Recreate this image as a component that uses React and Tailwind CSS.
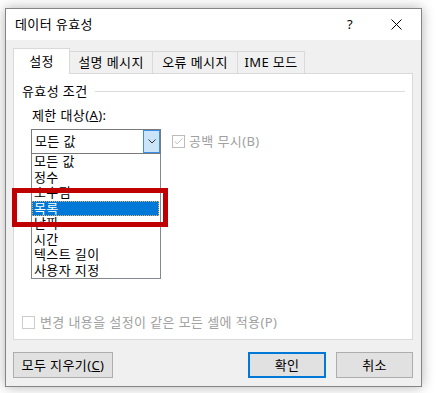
import { Check } from "lucide-react";

const items = ["모든 값", "정수", "소수점", "목록", "날짜", "시간", "텍스트 길이", "사용자 지정"];

const tabs = [
  { label: "설명 메시지", w: "w-[84px]" },
  { label: "오류 메시지", w: "w-[86px]" },
  { label: "IME 모드", w: "w-[68px]" },
];

const App = () => {
  return (
    <div className="w-[438px] h-[393px] bg-white pt-[8px] pl-[5px] font-['Noto_Sans','Noto_Sans_CJK_KR',sans-serif] text-[13px] tracking-[0.4px] text-black">
      <div className="w-[417px] h-[379px] border border-[#858585] bg-[#f0f0f0] flex flex-col shadow-[0_0_12px_rgba(0,0,0,0.3)]">
        {/* title bar */}
        <div className="h-[31px] shrink-0 bg-white flex items-center pl-[9px] pr-[19px]">
          <span className="leading-none">데이터 유효성</span>
          <span className="ml-auto mr-[38px] leading-none text-[13px]">?</span>
          <svg width="11" height="11" viewBox="0 0 11 11" className="text-black">
            <path d="M0.5 0.5 L10.5 10.5 M10.5 0.5 L0.5 10.5" stroke="currentColor" strokeWidth="1" fill="none" />
          </svg>
        </div>

        <div className="flex-1 flex flex-col pl-[7px] pr-[8px] pt-[8px]">
          {/* tabs */}
          <div className="flex items-end h-[25px]">
            <div className="relative z-10 w-[57px] h-[26px] -mb-px bg-white border border-b-0 border-[#d9d9d9] flex items-center justify-center leading-none">
              설정
            </div>
            {tabs.map((t) => (
              <div
                key={t.label}
                className={`${t.w} h-[22px] -ml-px bg-[#f0f0f0] border border-b-0 border-[#d9d9d9] flex items-center justify-center leading-none`}
              >
                {t.label}
              </div>
            ))}
          </div>

          {/* panel */}
          <div className="w-[400px] h-[267px] bg-white border border-[#d9d9d9] flex flex-col">
            <div className="mt-[9px] h-[16px] flex items-center pl-[8px] pr-[7px]">
              <span className="leading-none">유효성 조건</span>
              <div className="flex-1 h-px bg-[#dcdcdc] ml-[7px]" />
            </div>

            <div className="mt-[8px] h-[16px] flex items-center pl-[18px] leading-none">
              제한 대상(<span className="underline">A</span>):
            </div>

            <div className="mt-[6px] flex items-start pl-[17px]">
              <div className="relative w-[130px]">
                <div className="h-[25px] border border-[#7a7a7a] flex items-stretch">
                  <span className="flex-1 flex items-center pl-[3px] leading-none">모든 값</span>
                  <div className="w-[17px] bg-[#cce4f7] border border-[#3d8ee6] flex items-center justify-center">
                    <svg width="8" height="5" viewBox="0 0 8 5">
                      <path d="M0.5 0.5 L4 4 L7.5 0.5" stroke="#333" strokeWidth="1" fill="none" />
                    </svg>
                  </div>
                </div>
                <div className="border border-t-0 border-[#828790] bg-white flex flex-col">
                  {items.map((it) =>
                    it === "목록" ? (
                      <div
                        key={it}
                        className="h-[15.5px] mr-px bg-[#0078d7] text-white border border-dotted border-[#e0b070] flex items-center pl-[1px] leading-none"
                      >
                        {it}
                      </div>
                    ) : (
                      <div key={it} className="h-[15.5px] flex items-center pl-[2px] leading-none">
                        {it}
                      </div>
                    )
                  )}
                </div>
                {/* red highlight box */}
                <div className="absolute left-[-19px] top-[59px] w-[156px] h-[39px] border-[5px] border-[#c00000]" />
              </div>

              <div className="h-[25px] ml-[11px] flex items-center text-[#a0a0a0]">
                <div className="w-[13px] h-[13px] border border-[#bcbcbc] flex items-center justify-center mr-[4px]">
                  <Check size={11} strokeWidth={1.5} className="text-[#a0a0a0]" />
                </div>
                <span className="leading-none">공백 무시(B)</span>
              </div>
            </div>

            <div className="mt-auto mb-[9px] h-[16px] flex items-center pl-[8px] text-[#a0a0a0]">
              <div className="w-[13px] h-[13px] border border-[#cccccc] mr-[5px]" />
              <span className="leading-none">변경 내용을 설정이 같은 모든 셀에 적용(P)</span>
            </div>
          </div>

          {/* buttons */}
          <div className="mt-[12px] flex items-center">
            <button className="w-[100px] h-[26px] bg-[#e1e1e1] border border-[#adadad] leading-none">
              모두 지우기(<span className="underline">C</span>)
            </button>
            <button className="ml-auto w-[78px] h-[26px] bg-[#e1e1e1] border-2 border-[#0078d7] leading-none">
              확인
            </button>
            <button className="ml-[10px] w-[77px] h-[26px] bg-[#e1e1e1] border border-[#adadad] leading-none">
              취소
            </button>
          </div>
        </div>
      </div>
    </div>
  );
};

export default App;
